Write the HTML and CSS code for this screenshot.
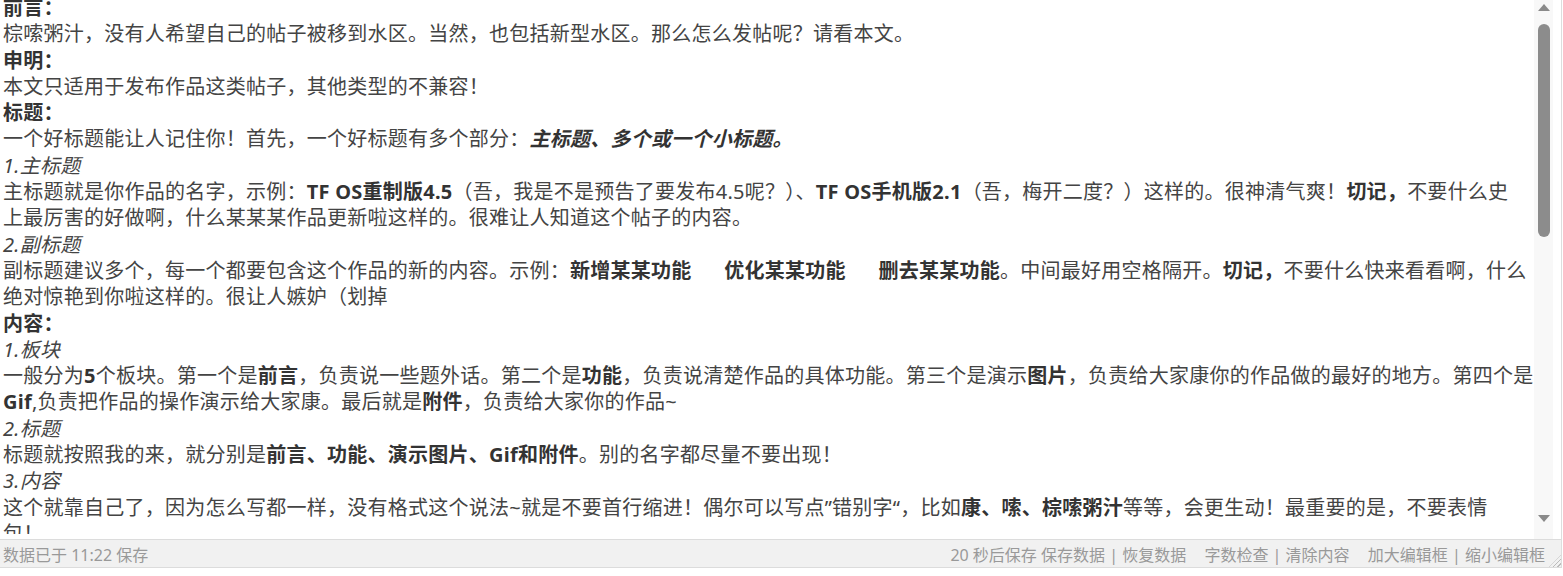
FILE: index.html
```html
<!DOCTYPE html>
<html lang="zh-CN">
<head>
    <meta charset="UTF-8">
    <meta name="viewport" content="width=device-width, initial-scale=1.0">
    <title>编辑器</title>
    <link rel="stylesheet" href="styles.css">
</head>
<body>

<div class="editor-box">
    <div class="editor">
        <div class="editor-content">
            <div class="line"><b>前言：</b></div>
            <div class="line">棕嗦粥汁，没有人希望自己的帖子被移到水区。当然，也包括新型水区。那么怎么发帖呢？请看本文。</div>
            <div class="line"><b>申明：</b></div>
            <div class="line">本文只适用于发布作品这类帖子，其他类型的不兼容！</div>
            <div class="line"><b>标题：</b></div>
            <div class="line">一个好标题能让人记住你！首先，一个好标题有多个部分：<b><i>主标题、多个或一个小标题。</i></b></div>
            <div class="line"><i>1.主标题</i></div>
            <div class="line">主标题就是你作品的名字，示例：<b>TF OS重制版4.5</b>（吾，我是不是预告了要发布4.5呢？）、<b>TF OS手机版2.1</b>（吾，梅开二度？）这样的。很神清气爽！<b>切记，</b>不要什么史</div>
            <div class="line">上最厉害的好做啊，什么某某某作品更新啦这样的。很难让人知道这个帖子的内容。</div>
            <div class="line"><i>2.副标题</i></div>
            <div class="line">副标题建议多个，每一个都要包含这个作品的新的内容。示例：<b>新增某某功能&nbsp;&nbsp;&nbsp;&nbsp;&nbsp;&nbsp;优化某某功能&nbsp;&nbsp;&nbsp;&nbsp;&nbsp;&nbsp;删去某某功能</b>。中间最好用空格隔开。<b>切记，</b>不要什么快来看看啊，什么</div>
            <div class="line">绝对惊艳到你啦这样的。很让人嫉妒（划掉</div>
            <div class="line"><b>内容：</b></div>
            <div class="line"><i>1.板块</i></div>
            <div class="line">一般分为<b>5</b>个板块。第一个是<b>前言</b>，负责说一些题外话。第二个是<b>功能</b>，负责说清楚作品的具体功能。第三个是演示<b>图片</b>，负责给大家康你的作品做的最好的地方。第四个是</div>
            <div class="line"><b>Gif</b>,负责把作品的操作演示给大家康。最后就是<b>附件</b>，负责给大家你的作品~</div>
            <div class="line"><i>2.标题</i></div>
            <div class="line">标题就按照我的来，就分别是<b>前言、功能、演示图片、Gif和附件</b>。别的名字都尽量不要出现！</div>
            <div class="line"><i>3.内容</i></div>
            <div class="line">这个就靠自己了，因为怎么写都一样，没有格式这个说法~就是不要首行缩进！偶尔可以写点”错别字“，比如<b>康、嗦、棕嗦粥汁</b>等等，会更生动！最重要的是，不要表情</div>
            <div class="line">包！</div>
        </div>

        <div class="scrollbar">
            <span class="arrow up"></span>
            <div class="track">
                <div class="thumb"></div>
            </div>
            <span class="arrow down"></span>
        </div>
    </div>

    <div class="status-bar">
        <span class="status-left">数据已于 11:22 保存</span>
        <span class="status-right">
            <span>20 秒后保存</span>
            <span class="link">保存数据</span> <span class="sep">|</span> <span class="link">恢复数据</span>
            <span class="group">
                <span class="link">字数检查</span> <span class="sep">|</span> <span class="link">清除内容</span>
            </span>
            <span class="group">
                <span class="link">加大编辑框</span> <span class="sep">|</span> <span class="link">缩小编辑框</span>
            </span>
        </span>
        <span class="grip"></span>
    </div>
</div>

</body>
</html>
```

FILE: styles.css
```css
* {
    margin: 0;
    padding: 0;
    box-sizing: border-box;
}

body {
    font-family: "Noto Sans", "Noto Sans CJK SC", sans-serif;
    background-color: #fff;
    color: #444;
}

.editor-box {
    width: 1562px;
    border-right: 1px solid #ddd;
}

.editor {
    display: flex;
    height: 539px;
    overflow: hidden;
}

.editor-content {
    flex: 1;
    height: 534px;
    padding-left: 3px;
    font-size: 20px;
    letter-spacing: 0.25px;
    line-height: 26.3px;
    overflow: hidden;
}

.editor-content .line:first-child {
    margin-top: -5px;
}

.line {
    white-space: nowrap;
}

.line b {
    color: #333;
}

/* 自定义滚动条 */
.scrollbar {
    width: 19px;
    margin-right: 8px;
    background-color: #f8f8f8;
    display: flex;
    flex-direction: column;
    align-items: center;
}

.arrow {
    display: block;
    width: 0;
    height: 0;
    border-left: 6px solid transparent;
    border-right: 6px solid transparent;
}

.arrow.up {
    margin-top: 4px;
    border-bottom: 7px solid #8a8a8a;
}

.arrow.down {
    margin-bottom: 17px;
    border-top: 7px solid #8a8a8a;
}

.track {
    flex: 1;
    width: 100%;
    display: flex;
    justify-content: center;
    padding-top: 13px;
}

.thumb {
    width: 12px;
    height: 213px;
    background-color: #8c8c8c;
    border-radius: 6px;
}

/* 底部状态栏 */
.status-bar {
    display: flex;
    align-items: center;
    height: 29px;
    padding-left: 3px;
    background-color: #f1f1f1;
    border-top: 1px solid #dcdcdc;
    border-bottom: 1px solid #dcdcdc;
    font-size: 16px;
    color: #999;
    position: relative;
}

.status-left {
    flex: 1;
}

.status-right {
    white-space: nowrap;
    margin-right: 16px;
}

.status-right .group {
    margin-left: 14px;
}

.sep {
    color: #999;
}

.grip {
    position: absolute;
    right: 0;
    bottom: 0;
    width: 12px;
    height: 12px;
    background: repeating-linear-gradient(135deg, transparent 0 2px, #bbb 2px 3px);
    clip-path: polygon(100% 0, 100% 100%, 0 100%);
}
```
